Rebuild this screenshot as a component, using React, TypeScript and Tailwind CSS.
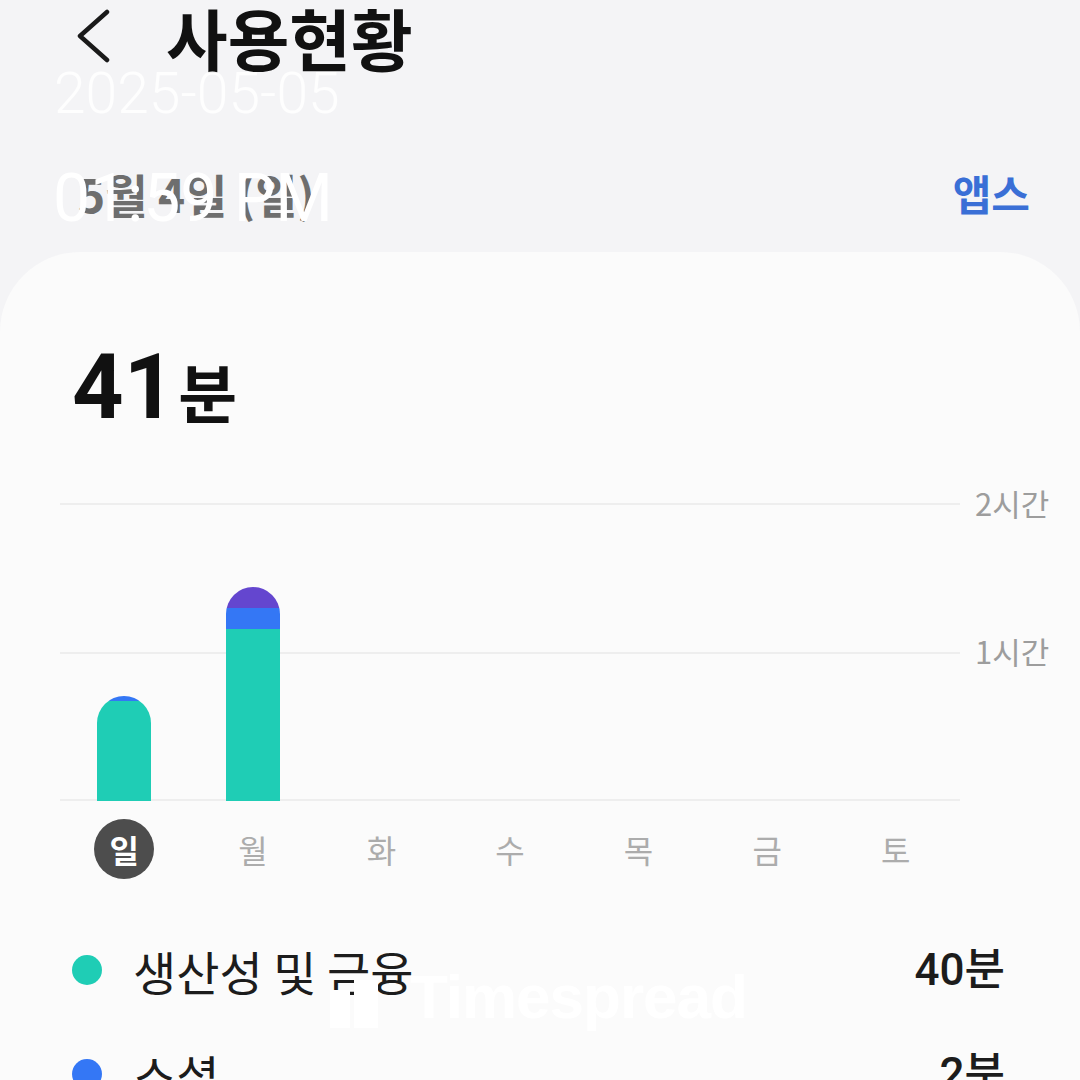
import { ReactNode } from "react";

const KR = "font-['Noto_Sans_CJK_KR',sans-serif]";
const RB = "font-['Roboto','Noto_Sans_CJK_KR',sans-serif]";

const days = ["일", "월", "화", "수", "목", "금", "토"];

// stacked segments per day, top to bottom (px)
const bars: { color: string; h: number }[][] = [
  [
    { color: "bg-[#3477f5]", h: 5 },
    { color: "bg-[#1fcdb5]", h: 100 },
  ],
  [
    { color: "bg-[#6446cf]", h: 21 },
    { color: "bg-[#3477f5]", h: 21 },
    { color: "bg-[#1fcdb5]", h: 172 },
  ],
  [],
  [],
  [],
  [],
  [],
];

function LegendRow({ dot, label, value }: { dot: string; label: ReactNode; value: string }) {
  return (
    <div className="flex h-[104px] items-center pl-[72px] pr-[75px]">
      <span className={`h-[30px] w-[30px] rounded-full ${dot}`} />
      <span className={`ml-[31px] text-[47px] leading-none text-[#1c1c1c] ${KR}`}>{label}</span>
      <span className={`ml-auto text-[44px] font-medium leading-none text-[#1c1c1c] ${RB}`}>{value}</span>
    </div>
  );
}

export default function App() {
  return (
    <div className="relative h-[1080px] w-[1080px] overflow-hidden bg-[#f4f4f6]">
      {/* Header */}
      <div className="flex h-[72px] items-center pl-[74px]">
        <svg width="38" height="54" viewBox="0 0 38 54" fill="none">
          <path d="M33 3 L6 27 L33 51" stroke="#1a1a1a" strokeWidth="4.5" strokeLinecap="round" strokeLinejoin="round" />
        </svg>
        <h1 className={`ml-[54px] text-[67px] font-bold leading-none text-[#111] ${KR}`}>사용현황</h1>
      </div>

      {/* Date + apps */}
      <div className="flex h-[180px] items-center justify-between pl-[78px] pr-[50px] pt-[62px]">
        <span className={`text-[46px] font-semibold leading-none text-[#6e6e6e] ${KR}`}>5월 4일 (일)</span>
        <span className={`text-[42px] font-semibold leading-none text-[#3a6fd6] ${KR}`}>앱스</span>
      </div>

      {/* Card */}
      <div className="rounded-t-[80px] bg-[#fbfbfb] pt-[91px]">
        <div className="flex items-baseline pl-[72px]">
          <span className={`text-[90px] font-bold leading-none text-[#111] ${RB}`}>41</span>
          <span className={`ml-[3px] text-[64px] font-bold leading-none text-[#111] ${KR}`}>분</span>
        </div>

        {/* Chart */}
        <div className="mt-[70px] flex pl-[60px]">
          <div className="relative w-[900px]">
            <div className="h-[149px] border-t-2 border-[#eeeeee]" />
            <div className="h-[149px] border-y-2 border-[#eeeeee]" />
            <div className="absolute inset-0 grid grid-cols-7 items-end justify-items-center">
              {bars.map((segs, i) => (
                <div key={i} className="flex w-[54px] flex-col overflow-hidden rounded-t-full">
                  {segs.map((s, j) => (
                    <div key={j} className={s.color} style={{ height: s.h }} />
                  ))}
                </div>
              ))}
            </div>
          </div>
          <div className={`-mt-[19px] ml-[15px] flex flex-col text-[31px] text-[#9d9d9d] ${KR}`}>
            <span className="h-[148px] leading-[38px]">2시간</span>
            <span className="h-[148px] leading-[38px]">1시간</span>
          </div>
        </div>

        {/* Day labels */}
        <div className="ml-[60px] mt-[18px] grid w-[900px] grid-cols-7">
          {days.map((d, i) => (
            <div key={d} className="flex h-[60px] items-center justify-center">
              {i === 0 ? (
                <span className={`flex h-[60px] w-[60px] items-center justify-center rounded-full bg-[#4d4d4d] text-[32px] font-bold text-white ${KR}`}>
                  {d}
                </span>
              ) : (
                <span className={`text-[32px] text-[#acacac] ${KR}`}>{d}</span>
              )}
            </div>
          ))}
        </div>

        {/* Legend */}
        <div className="mt-[39px]">
          <LegendRow dot="bg-[#1fcdb5]" label="생산성 및 금융" value="40분" />
          <LegendRow dot="bg-[#3477f5]" label="소셜" value="2분" />
        </div>
      </div>

      {/* Timestamp overlay */}
      <div className={`absolute left-[54px] top-[65px] text-[57px] font-light leading-none text-white/90 ${RB}`}>2025-05-05</div>
      <div className={`absolute left-[53px] top-[166px] text-[66px] leading-none text-white ${RB}`}>01:59 PM</div>

      {/* Watermark */}
      <div className="absolute left-[330px] top-[966px] flex items-end gap-[32px] text-white">
        <svg width="48" height="54" viewBox="0 0 48 54" fill="white">
          <rect x="0" y="16" width="20" height="38" />
          <rect x="24" y="6" width="24" height="48" />
        </svg>
        <span className="font-['Liberation_Sans',sans-serif] text-[62px] font-bold leading-none tracking-[-1px]">Timespread</span>
      </div>
    </div>
  );
}
